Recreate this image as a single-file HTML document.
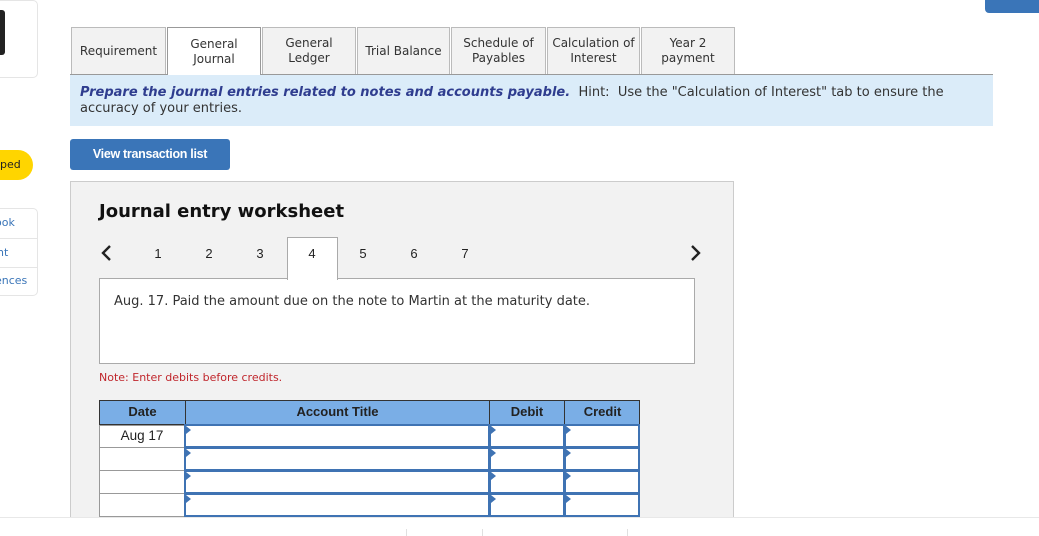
<!DOCTYPE html><html><head><style>
*{box-sizing:border-box;margin:0;padding:0}
body{width:1039px;height:536px;background:#fff;position:relative;overflow:hidden;font-family:"DejaVu Sans",Verdana,sans-serif;color:#222}
.a{position:absolute}
.tab{position:absolute;top:27px;height:47px;background:#f2f2f2;border:1px solid #bbb;border-bottom:none;font-size:12px;display:flex;align-items:center;justify-content:center;text-align:center;line-height:15px;color:#333}
.num{position:absolute;top:246px;font-family:"Liberation Sans",Arial,sans-serif;font-size:13px;width:20px;text-align:center;margin-left:-10px}
.cell{position:absolute;border:2px solid #3f73b3;background:#fff}
.tri{position:absolute;width:0;height:0;border-top:4px solid transparent;border-bottom:4px solid transparent;border-left:5px solid #3f73b3}
</style></head><body>
<div class="a" style="left:-10px;top:0;width:48px;height:78px;border:1px solid #e5e5e5;border-radius:5px"></div>
<div class="a" style="left:0;top:10px;width:5px;height:45px;background:#222;border-radius:0 3px 3px 0"></div>
<div class="a" style="left:-20px;top:150px;width:53px;height:30px;background:#ffd500;border-radius:15px;font-size:11px;line-height:30px;padding-left:20px">ped</div>
<div class="a" style="left:-10px;top:208px;width:48px;height:88px;border:1px solid #e5e5e5;border-radius:5px;font-size:11px;color:#3a75b8">
<div style="height:30px;line-height:28px;border-bottom:1px solid #e5e5e5;padding-left:4px">ook</div>
<div style="height:29px;line-height:28px;border-bottom:1px solid #e5e5e5;padding-left:6px">nt</div>
<div style="line-height:26px;padding-left:4px">ences</div></div>
<div class="a" style="left:985px;top:-6px;width:60px;height:19px;background:#3a75b8;border-radius:4px"></div>

<div class="tab" style="left:71px;width:95px">Requirement</div>
<div class="tab" style="left:167px;width:94px;background:#fff;height:48px;border-color:#999;z-index:2">General<br>Journal</div>
<div class="tab" style="left:262px;width:94px">General<br>Ledger</div>
<div class="tab" style="left:357px;width:93px">Trial Balance</div>
<div class="tab" style="left:451px;width:95px">Schedule of<br>Payables</div>
<div class="tab" style="left:547px;width:93px">Calculation of<br>Interest</div>
<div class="tab" style="left:641px;width:94px">Year 2<br>payment</div>
<div class="a" style="left:70px;top:74px;width:923px;height:1px;background:#999"></div>
<div class="a" style="left:70px;top:75px;width:923px;height:51px;background:#dbecf9;font-size:13px;padding:10px 30px 0 10px;line-height:16px;color:#333"><b style="color:#2f3d8f;font-style:italic">Prepare the journal entries related to notes and accounts payable.</b>&nbsp;&nbsp;Hint:&nbsp;&nbsp;Use the "Calculation of Interest" tab to ensure the accuracy of your entries.</div>
<div class="a" style="left:70px;top:139px;width:160px;height:31px;background:#3a75b8;border-radius:3px;color:#fff;font-family:'Liberation Sans',Arial,sans-serif;font-weight:bold;font-size:12.5px;letter-spacing:-0.3px;text-align:center;line-height:31px">View transaction list</div>

<div class="a" style="left:70px;top:181px;width:664px;height:345px;background:#f2f2f2;border:1px solid #ccc"></div>
<div class="a" style="left:99px;top:201px;font-size:18px;font-weight:bold;color:#111">Journal entry worksheet</div>
<svg class="a" style="left:100px;top:244px" width="14" height="18"><path d="M10 2 L3 9 L10 16" fill="none" stroke="#222" stroke-width="2.4"/></svg>
<svg class="a" style="left:688px;top:244px" width="14" height="18"><path d="M4 2 L11 9 L4 16" fill="none" stroke="#222" stroke-width="2.4"/></svg>
<div class="a" style="left:287px;top:237px;width:51px;height:43px;background:#fff;border:1px solid #aaa;border-bottom:none;z-index:2"></div>
<div class="a" style="left:99px;top:278px;width:596px;height:86px;background:#fff;border:1px solid #aaa;font-size:13px;padding:15px 0 0 14px;color:#333">Aug. 17. Paid the amount due on the note to Martin at the maturity date.</div>
<div class="num" style="left:158px">1</div><div class="num" style="left:209px">2</div><div class="num" style="left:260px">3</div><div class="num" style="left:312px;z-index:3">4</div><div class="num" style="left:363px">5</div><div class="num" style="left:414px">6</div><div class="num" style="left:465px">7</div>
<div class="a" style="left:99px;top:371px;font-size:11px;color:#c0262c">Note: Enter debits before credits.</div>

<div class="a" style="left:99px;top:400px;width:541px;height:25px;background:#7aaee6;border:1px solid #333;font-family:'Liberation Sans',Arial,sans-serif;font-size:13px;font-weight:bold;color:#222">
<div class="a" style="left:0;width:85px;text-align:center;line-height:22px">Date</div>
<div class="a" style="left:85px;width:305px;text-align:center;line-height:22px;border-left:1px solid #333;border-right:1px solid #333;height:23px">Account Title</div>
<div class="a" style="left:390px;width:75px;text-align:center;line-height:22px;border-right:1px solid #333;height:23px">Debit</div>
<div class="a" style="left:465px;width:75px;text-align:center;line-height:22px">Credit</div></div>
<div class="a" style="left:99px;top:425px;width:86px;height:100px;background:#fff;border:1px solid #999"></div>
<div class="a" style="left:99px;top:447px;width:86px;height:1px;background:#999"></div>
<div class="a" style="left:99px;top:470px;width:86px;height:1px;background:#999"></div>
<div class="a" style="left:99px;top:493px;width:86px;height:1px;background:#999"></div>
<div class="a" style="left:99px;top:516px;width:86px;height:1px;background:#999"></div>
<div class="a" style="left:100px;top:428px;width:84px;text-align:center;font-family:'Liberation Sans';font-size:13.5px">Aug 17</div>

<div class="cell" style="left:184px;top:424px;width:306px;height:24px"></div><div class="cell" style="left:489px;top:424px;width:76px;height:24px"></div><div class="cell" style="left:564px;top:424px;width:76px;height:24px"></div>
<div class="cell" style="left:184px;top:447px;width:306px;height:24px"></div><div class="cell" style="left:489px;top:447px;width:76px;height:24px"></div><div class="cell" style="left:564px;top:447px;width:76px;height:24px"></div>
<div class="cell" style="left:184px;top:470px;width:306px;height:24px"></div><div class="cell" style="left:489px;top:470px;width:76px;height:24px"></div><div class="cell" style="left:564px;top:470px;width:76px;height:24px"></div>
<div class="cell" style="left:184px;top:493px;width:306px;height:24px"></div><div class="cell" style="left:489px;top:493px;width:76px;height:24px"></div><div class="cell" style="left:564px;top:493px;width:76px;height:24px"></div>
<div class="tri" style="left:186px;top:426px"></div><div class="tri" style="left:491px;top:426px"></div><div class="tri" style="left:566px;top:426px"></div>
<div class="tri" style="left:186px;top:449px"></div><div class="tri" style="left:491px;top:449px"></div><div class="tri" style="left:566px;top:449px"></div>
<div class="tri" style="left:186px;top:472px"></div><div class="tri" style="left:491px;top:472px"></div><div class="tri" style="left:566px;top:472px"></div>
<div class="tri" style="left:186px;top:495px"></div><div class="tri" style="left:491px;top:495px"></div><div class="tri" style="left:566px;top:495px"></div>

<div class="a" style="left:0;top:517px;width:1039px;height:19px;background:#fff;border-top:1px solid #e8e8e8;z-index:5"></div>
<div class="a" style="left:406px;top:529px;width:1px;height:7px;background:#e0e0e0;z-index:6"></div>
<div class="a" style="left:482px;top:529px;width:1px;height:7px;background:#e0e0e0;z-index:6"></div>
<div class="a" style="left:627px;top:529px;width:1px;height:7px;background:#e0e0e0;z-index:6"></div>
</body></html>
